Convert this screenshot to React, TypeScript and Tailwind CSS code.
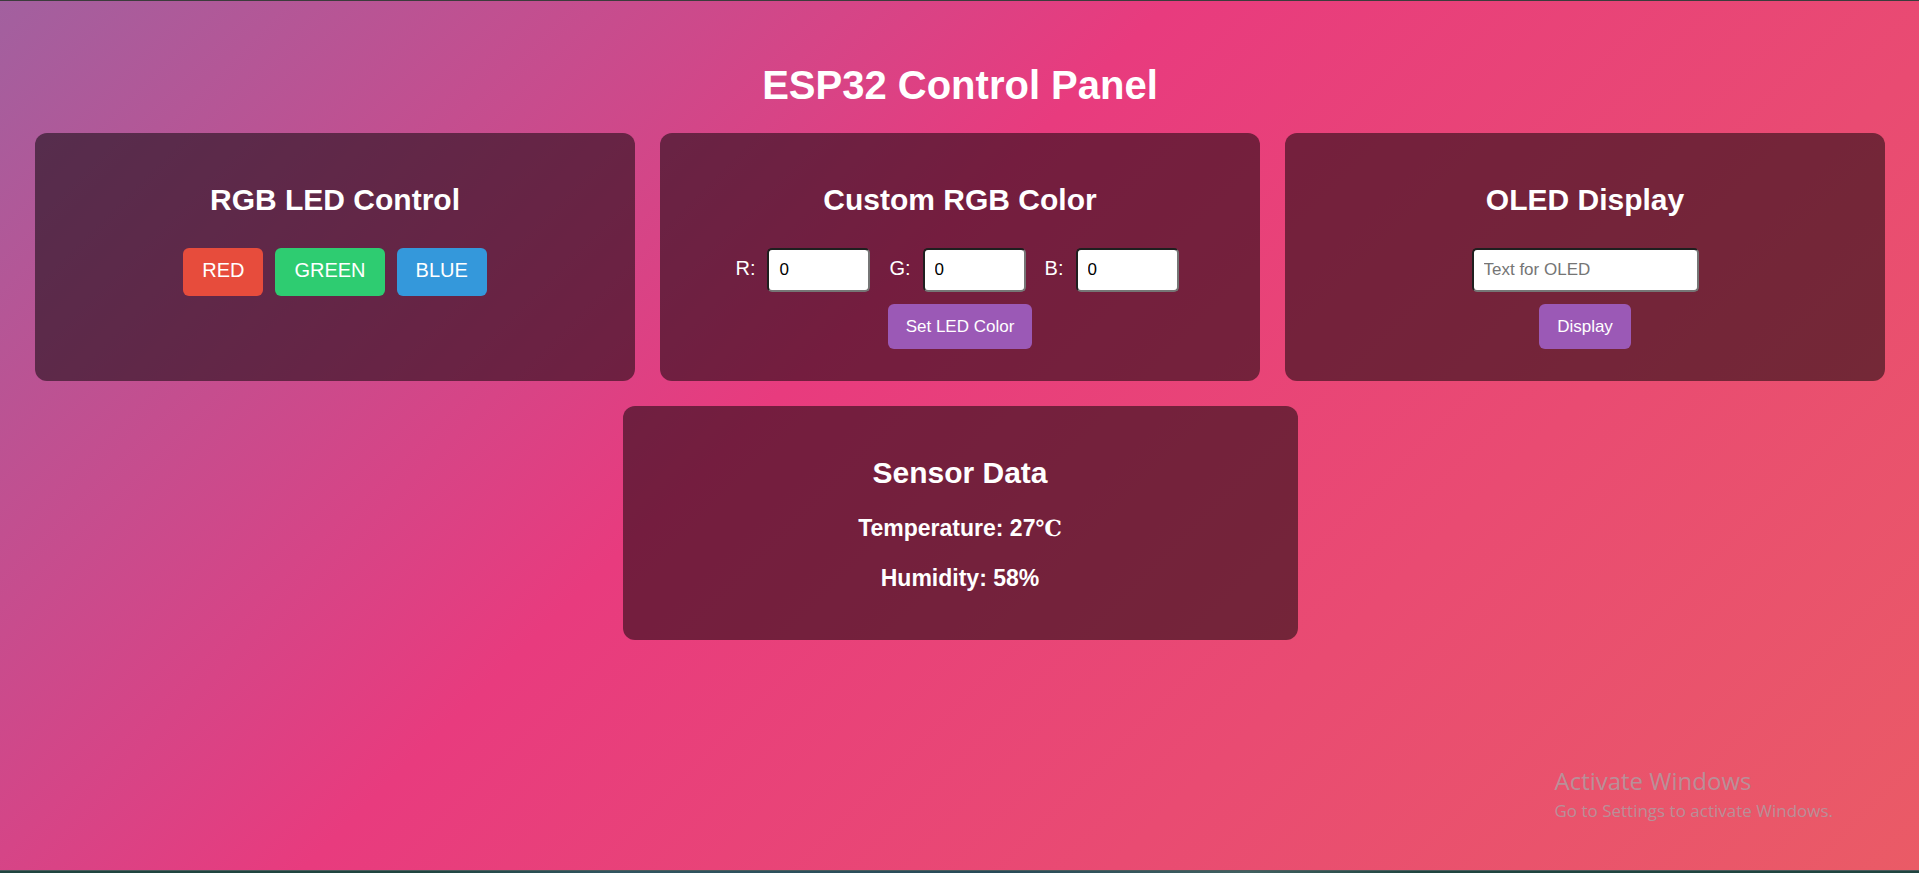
import { useState } from "react";
import type { ReactNode } from "react";

const fieldClass =
  "h-11 rounded-[5px] border-2 border-t-[#1f1f1f] border-l-[#1f1f1f] border-r-[#767676] border-b-[#767676] bg-white px-2.5 text-[17px] text-black placeholder:text-[#757575]";

function Card({ title, className, children }: { title: string; className: string; children: ReactNode }) {
  return (
    <section className={"rounded-xl bg-black/50 px-5 pt-[49px] text-center " + className}>
      <h2 className="text-[30px] leading-9 font-bold">{title}</h2>
      {children}
    </section>
  );
}

function Channel({ name }: { name: string }) {
  const [value, setValue] = useState("0");
  return (
    <div className="flex items-start gap-3">
      <label htmlFor={name} className="pt-1.5 text-xl leading-7">
        {name}:
      </label>
      <input id={name} value={value} onChange={(e) => setValue(e.target.value)} className={"w-[103px] " + fieldClass} />
    </div>
  );
}

function ColorButton({ label, className }: { label: string; className: string }) {
  return (
    <button type="button" className={"h-12 rounded-md px-[19px] pb-1 text-xl " + className}>
      {label}
    </button>
  );
}

function ActionButton({ label }: { label: string }) {
  return (
    <button type="button" className="mt-3 h-[45px] rounded-md bg-[#9b59b6] px-[18px] text-[17px]">
      {label}
    </button>
  );
}

export default function App() {
  return (
    <div className="relative flex min-h-screen flex-col border-t border-[#3c3c3c] bg-[linear-gradient(135deg,#a2609f_0%,#e83b7e_42%,#ea5b66_100%)] font-['Liberation_Sans',Arial,sans-serif] text-white">
      <main className="flex grow flex-col items-center pt-[60px] pr-[34px] pl-[35px]">
        <h1 className="text-[40px] leading-[48px] font-bold">ESP32 Control Panel</h1>
        <div className="mt-6 grid w-full max-w-[1850px] grid-cols-3 gap-[25px]">
          <Card title="RGB LED Control" className="min-h-[248px]">
            <div className="mt-[30px] flex justify-center gap-3">
              <ColorButton label="RED" className="bg-[#e74c3c]" />
              <ColorButton label="GREEN" className="bg-[#2ecc71]" />
              <ColorButton label="BLUE" className="bg-[#3498db]" />
            </div>
          </Card>
          <Card title="Custom RGB Color" className="min-h-[248px]">
            <div className="mt-[30px] flex justify-center gap-[19px] pr-1.5">
              <Channel name="R" />
              <Channel name="G" />
              <Channel name="B" />
            </div>
            <ActionButton label="Set LED Color" />
          </Card>
          <Card title="OLED Display" className="min-h-[248px]">
            <div className="mt-[30px]">
              <input aria-label="Text for OLED" placeholder="Text for OLED" className={"block mx-auto w-[227px] " + fieldClass} />
            </div>
            <ActionButton label="Display" />
          </Card>
        </div>
        <Card title="Sensor Data" className="mt-[25px] min-h-[234px] w-[675px] max-w-full">
          <p className="mt-[23px] h-7 text-[23px] leading-7 font-bold">
            Temperature: 27<span className="font-['DejaVu_Serif',serif] text-[22px] leading-7 font-bold">℃</span>
          </p>
          <p className="mt-[22px] text-[23px] leading-7 font-bold">Humidity: 58%</p>
        </Card>
      </main>
      <aside className="absolute right-[86px] bottom-12 text-[#b98f98] font-['Open_Sans','Noto_Sans',sans-serif]">
        <p className="text-2xl leading-8">Activate Windows</p>
        <p className="text-[17px] leading-7">Go to Settings to activate Windows.</p>
      </aside>
      <footer className="h-[3px] border-t border-[#4c5a5c] bg-[linear-gradient(90deg,#1f4540_0%,#1f4540_22%,#305560_32%,#274a58_52%,#406060_65%,#1f4540_74%,#1f4540_100%)]" />
    </div>
  );
}
